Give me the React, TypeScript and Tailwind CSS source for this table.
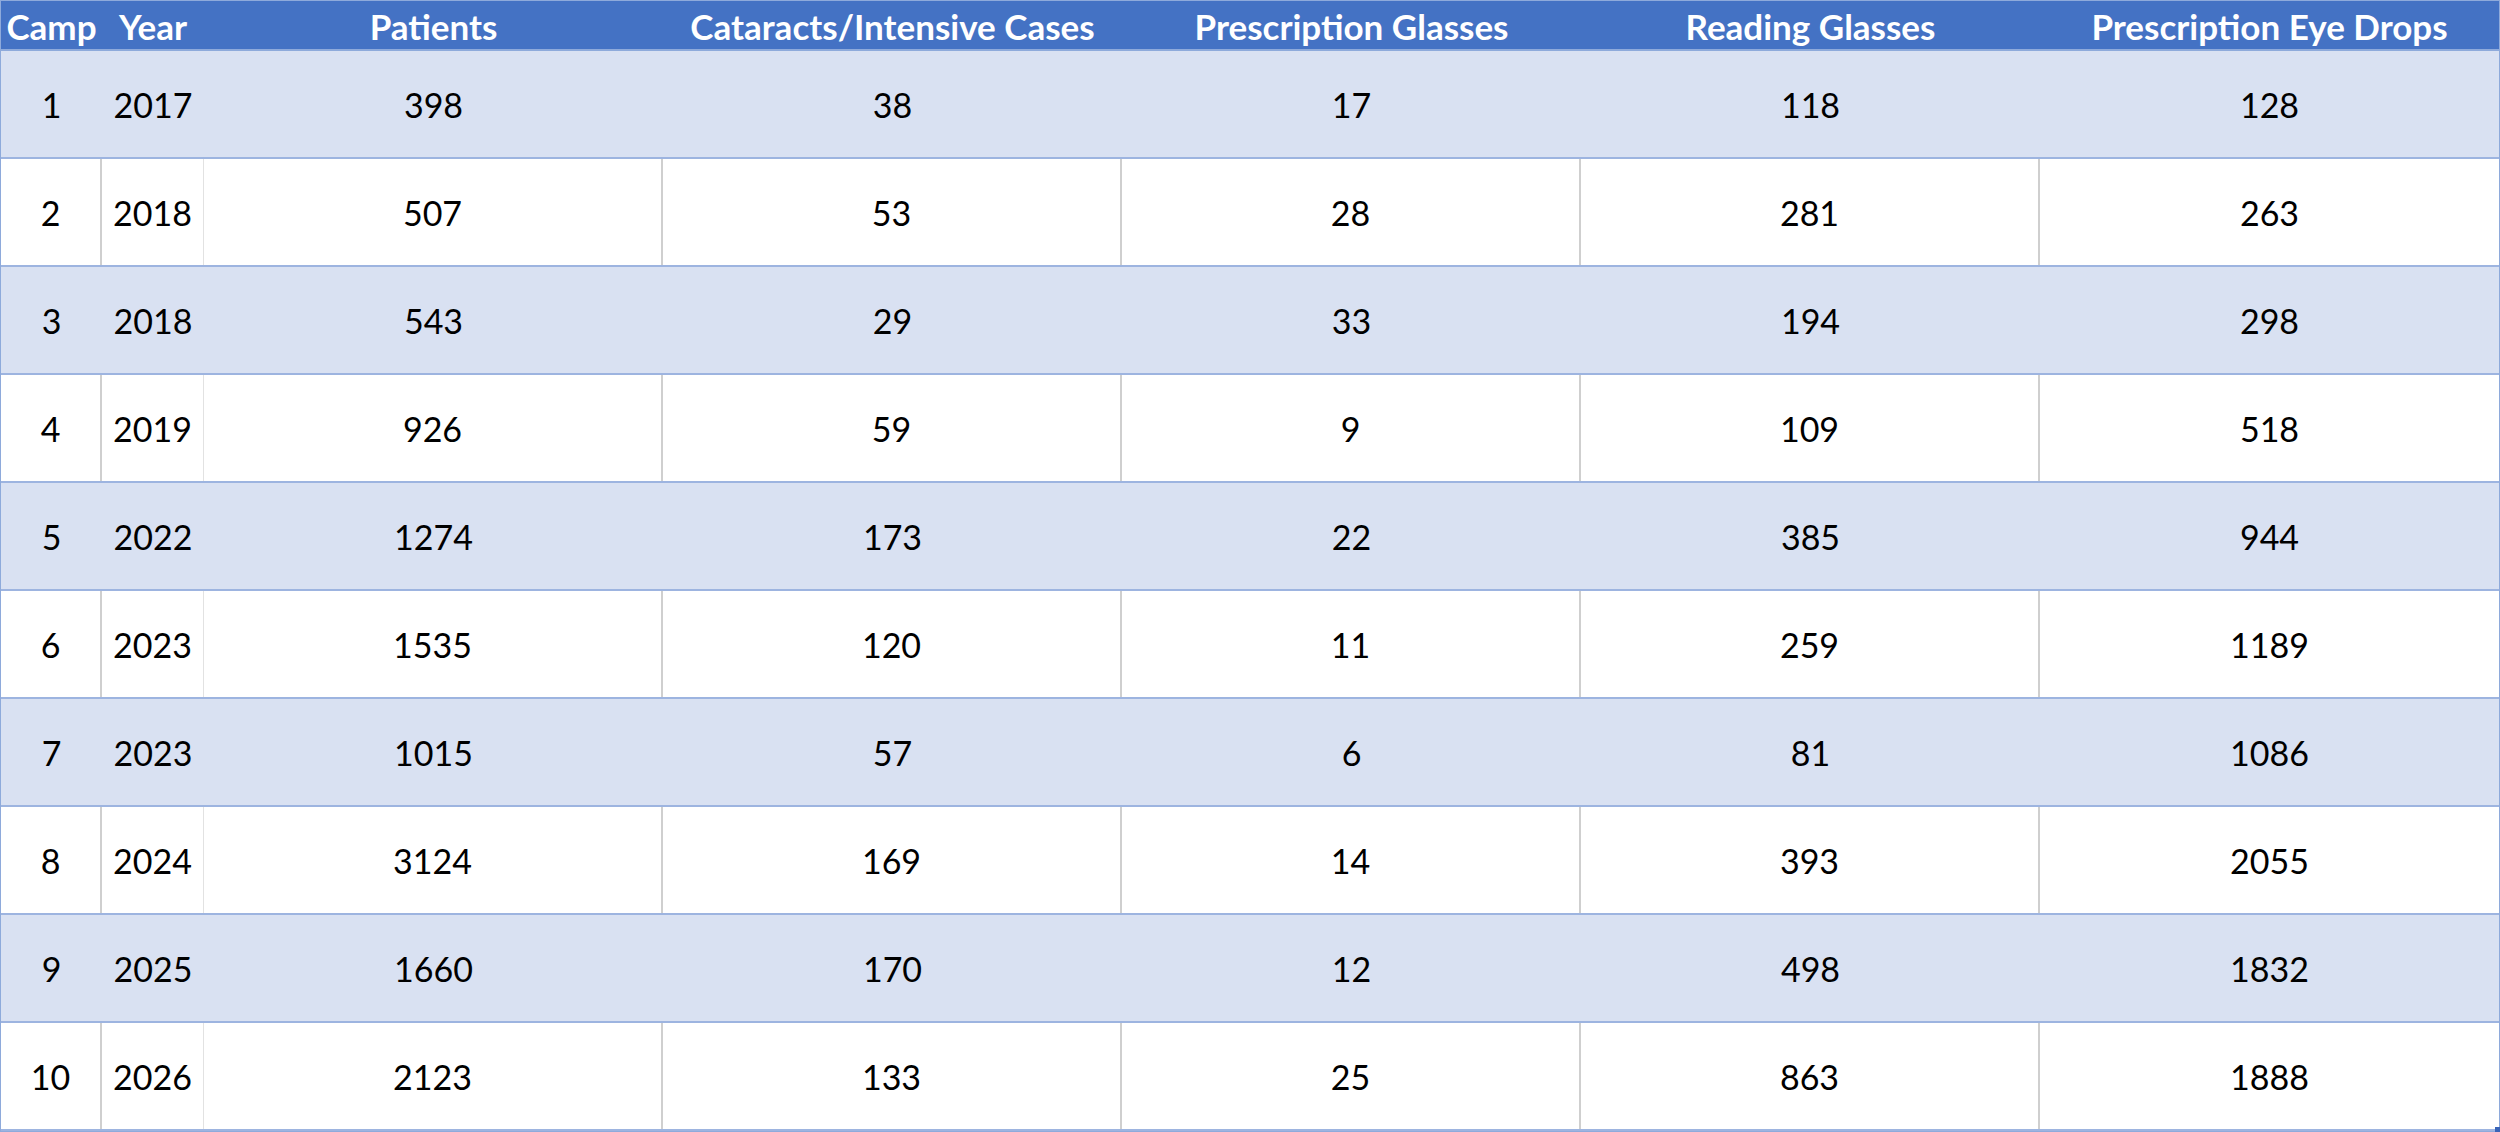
const headers = [
  'Camp',
  'Year',
  'Patients',
  'Cataracts/Intensive Cases',
  'Prescription Glasses',
  'Reading Glasses',
  'Prescription Eye Drops',
];

const rows: (string | number)[][] = [
  [1, 2017, 398, 38, 17, 118, 128],
  [2, 2018, 507, 53, 28, 281, 263],
  [3, 2018, 543, 29, 33, 194, 298],
  [4, 2019, 926, 59, 9, 109, 518],
  [5, 2022, 1274, 173, 22, 385, 944],
  [6, 2023, 1535, 120, 11, 259, 1189],
  [7, 2023, 1015, 57, 6, 81, 1086],
  [8, 2024, 3124, 169, 14, 393, 2055],
  [9, 2025, 1660, 170, 12, 498, 1832],
  [10, 2026, 2123, 133, 25, 863, 1888],
];

const cols = 'grid grid-cols-[101px_102px_459px_459px_459px_459px_1fr]';

function Row({ cells, index }: { cells: (string | number)[]; index: number }) {
  const banded = index % 2 === 0;
  return (
    <div
      className={`${cols} h-[108px] border-b-2 border-[#9db4e0] ${banded ? 'bg-[#d9e1f2]' : 'bg-white'}`}
    >
      {cells.map((c, i) => {
        let line = '';
        if (!banded && i < cells.length - 1) {
          line = i === 1 ? 'border-r border-[#e2e2e2]' : 'border-r-2 border-[#cfcfcf]';
        }
        return (
          <div key={i} className={`flex items-center justify-center pt-[2px] ${line}`}>
            {c}
          </div>
        );
      })}
    </div>
  );
}

export default function App() {
  return (
    <div className="relative w-[2500px] h-[1132px] overflow-hidden bg-white">
      <div
        className="border border-[#8eaadb] text-[34px] text-black leading-none"
        style={{ fontFamily: 'Lato, "Open Sans", sans-serif' }}
      >
        <div className={`${cols} h-[50px] bg-[#4472c4] border-b-2 border-[#8eaadb] text-[35px] font-bold text-white`}>
          {headers.map((h) => (
            <div key={h} className="flex items-center justify-center pt-[3px] whitespace-nowrap">
              {h}
            </div>
          ))}
        </div>
        {rows.map((r, i) => (
          <Row key={i} cells={r} index={i} />
        ))}
      </div>
      <div className="absolute right-0 bottom-0 w-[5px] h-[5px] bg-[#3a64b8]" />
    </div>
  );
}
